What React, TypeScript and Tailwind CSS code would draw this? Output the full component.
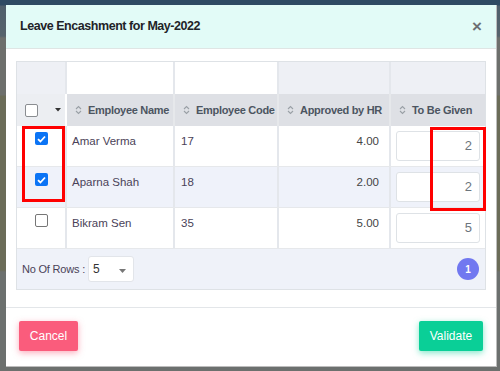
import React from "react";

const rows = [
  { name: "Amar Verma", code: "17", approved: "4.00", given: "2", checked: true },
  { name: "Aparna Shah", code: "18", approved: "2.00", given: "2", checked: true },
  { name: "Bikram Sen", code: "35", approved: "5.00", given: "5", checked: false },
];

function SortIcon() {
  return (
    <svg width="7" height="10" viewBox="0 0 7 10" className="shrink-0">
      <path d="M1 4 L3.5 1.5 L6 4" fill="none" stroke="#9aa0a6" strokeWidth="1.1" />
      <path d="M1 6 L3.5 8.5 L6 6" fill="none" stroke="#9aa0a6" strokeWidth="1.1" />
    </svg>
  );
}

function Checkbox({ checked }: { checked?: boolean }) {
  if (checked) {
    return (
      <div className="w-[13px] h-[13px] rounded-[2px] bg-[#0b74f5] flex items-center justify-center">
        <svg width="9" height="8" viewBox="0 0 9 8">
          <path d="M1 4.2 L3.4 6.5 L8 1.5" fill="none" stroke="white" strokeWidth="1.8" />
        </svg>
      </div>
    );
  }
  return <div className="w-[13px] h-[13px] rounded-[2px] border border-[#767676] bg-white" />;
}

function HeaderCell({ label }: { label: string }) {
  return (
    <div className="flex items-center gap-[6px] pl-[8px] border-r-2 border-[#e6e8eb] last:border-r-0 whitespace-nowrap overflow-hidden">
      <SortIcon />
      <span className="text-[11px] font-bold tracking-[-0.3px] text-[#4c5561]">{label}</span>
    </div>
  );
}

export default function App() {
  return (
    <div
      className="relative w-[500px] h-[371px] overflow-hidden bg-[linear-gradient(180deg,#2e4a63_0px,#2e4a63_5px,#4f5f6c_6px,#56636c_36px,#6d6f6c_38px,#6d6f6c_95px,#6b6c58_96px,#6b6c58_270px,#6c706e_272px,#6c706e_371px)]"
      style={{ fontFamily: '"Liberation Sans", Arial, sans-serif' }}
    >
      <div className="mt-[5px] ml-[6px] w-[491px] h-[362px] bg-white border-r border-b border-[#bdbdbd] flex flex-col">
        {/* header */}
        <div className="h-[44px] shrink-0 bg-[#e2fbf7] border-b border-[#dfe5e4] flex items-center justify-between pl-[14px] pr-[14px]">
          <span className="text-[12.5px] font-bold tracking-[-0.45px] text-[#1f2328]">Leave Encashment for May-2022</span>
          <span className="text-[17px] font-bold text-[#6c6f72] leading-none">×</span>
        </div>

        {/* body */}
        <div className="pt-[12px] pb-[17px] px-[10px] border-b border-[#e3e6e9]">
          <div className="border border-[#dee2e6]">
            {/* filter row */}
            <div className="grid grid-cols-[50px_108px_104px_112px_1fr] h-[32px]">
              <div className="bg-[#eef0f5] border-r-2 border-[#e4e7ec]" />
              <div className="bg-white border-r-2 border-[#e4e7ec]" />
              <div className="bg-white border-r-2 border-[#e4e7ec]" />
              <div className="bg-[#eef0f5] border-r-2 border-[#e4e7ec]" />
              <div className="bg-[#eef0f5]" />
            </div>
            {/* header row */}
            <div className="grid grid-cols-[50px_108px_104px_112px_1fr] h-[32px] bg-[#dee0e5]">
              <div className="bg-[#eceef2] border-r-2 border-white flex items-center pl-[8px] gap-[17px]">
                <div className="w-[13px] h-[13px] rounded-[2px] border border-[#8a8d91] bg-white" />
                <svg width="6" height="4" viewBox="0 0 6 4">
                  <path d="M0 0 H6 L3 3.5 Z" fill="#333" />
                </svg>
              </div>
              <HeaderCell label="Employee Name" />
              <HeaderCell label="Employee Code" />
              <HeaderCell label="Approved by HR" />
              <HeaderCell label="To Be Given" />
            </div>
            {/* data rows */}
            {rows.map((r, i) => (
              <div
                key={r.name}
                className={
                  "grid grid-cols-[50px_108px_104px_112px_1fr] h-[41px] border-b border-[#e6e8eb] text-[11.5px] text-[#4a4258] " +
                  (i === 1 ? "bg-[#eff2fa]" : "bg-white")
                }
              >
                <div className="flex justify-center pt-[6px] border-r-2 border-[#e4e7ec]">
                  <Checkbox checked={r.checked} />
                </div>
                <div className="pl-[5px] pt-[7px] border-r-2 border-[#e4e7ec]">{r.name}</div>
                <div className="pl-[6px] pt-[7px] border-r-2 border-[#e4e7ec]">{r.code}</div>
                <div className="pr-[10px] pt-[7px] text-right border-r-2 border-[#e4e7ec] text-[#444]">{r.approved}</div>
                <div className="pl-[5px] pr-[5px] pt-[5px]">
                  <div className="h-[30px] bg-white border border-[#dee2e6] rounded-[3px] flex items-center justify-end pr-[7px] text-[13px] text-[#6c757d]">
                    {r.given}
                  </div>
                </div>
              </div>
            ))}
            {/* footer row */}
            <div className="h-[40px] bg-[#eff2f9] flex items-center justify-between pl-[5px] pr-[6px]">
              <div className="flex items-center gap-[3px]">
                <span className="text-[11px] tracking-[-0.2px] text-[#4a4258]">No Of Rows :</span>
                <div className="w-[46px] h-[26px] bg-white border border-[#e2e5ea] rounded-[3px] flex items-center justify-between pl-[4px] pr-[7px]">
                  <span className="text-[12px] text-[#333]">5</span>
                  <svg width="7" height="5" viewBox="0 0 7 5" className="mt-[4px]">
                    <path d="M0 0 H7 L3.5 4 Z" fill="#777" />
                  </svg>
                </div>
              </div>
              <div className="w-[22px] h-[22px] rounded-full bg-[#7178f0] flex items-center justify-center text-[10px] font-bold text-white">
                1
              </div>
            </div>
          </div>
        </div>

        {/* footer */}
        <div className="flex-1 flex justify-between items-start pt-[13px] pl-[13px] pr-[13px]">
          <button className="h-[30px] w-[59px] rounded-[2px] bg-[#fa5c7c] text-white text-[12px] shadow-[0_2px_6px_rgba(250,92,124,0.5)]">
            Cancel
          </button>
          <button className="h-[30px] w-[64px] rounded-[2px] bg-[#0acf97] text-white text-[12px] shadow-[0_2px_6px_rgba(10,207,151,0.5)]">
            Validate
          </button>
        </div>
      </div>

      {/* annotation boxes */}
      <div className="absolute left-[22px] top-[126px] w-[43px] h-[76px] border-[3px] border-[#ff0000]" />
      <div className="absolute left-[430px] top-[127px] w-[56px] h-[84px] border-[3px] border-[#ff0000]" />
    </div>
  );
}
